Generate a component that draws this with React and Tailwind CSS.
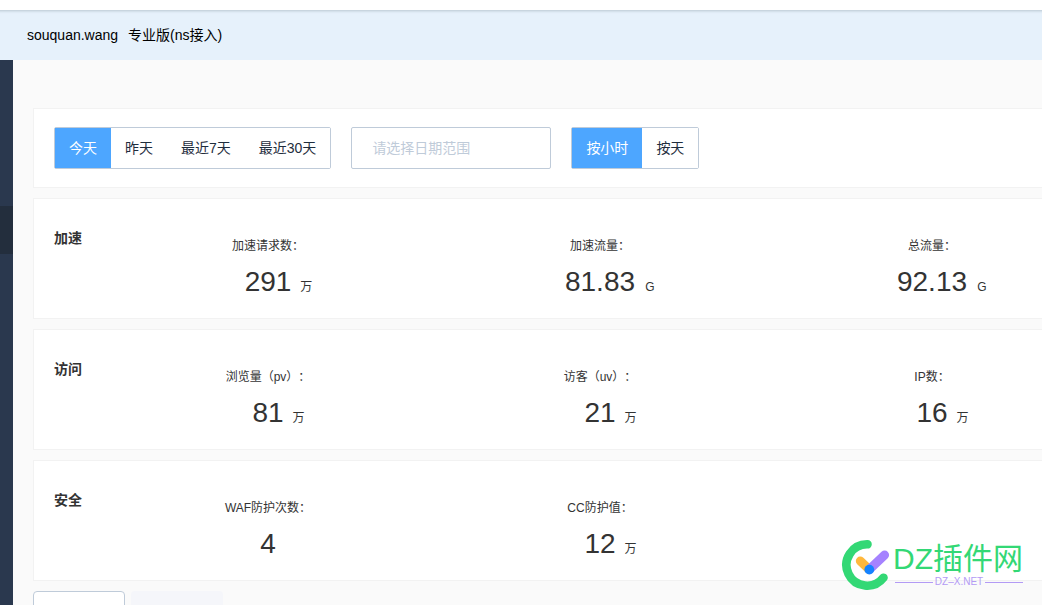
import React, { useState } from 'react';

const ranges = ['今天', '昨天', '最近7天', '最近30天'];
const units = ['按小时', '按天'];

const sections = [
  {
    title: '加速',
    items: [
      { label: '加速请求数：', value: '291', unit: '万' },
      { label: '加速流量：', value: '81.83', unit: 'G' },
      { label: '总流量：', value: '92.13', unit: 'G' },
    ],
  },
  {
    title: '访问',
    items: [
      { label: '浏览量（pv）：', value: '81', unit: '万' },
      { label: '访客（uv）：', value: '21', unit: '万' },
      { label: 'IP数：', value: '16', unit: '万' },
    ],
  },
  {
    title: '安全',
    items: [
      { label: 'WAF防护次数：', value: '4' },
      { label: 'CC防护值：', value: '12', unit: '万' },
    ],
  },
];

const ButtonGroup = ({ options, active, onSelect }) => (
  <div className="flex h-[42px] border border-[#bfcbd9] rounded-xs">
    {options.map((name, index) => (
      <button
        key={name}
        type="button"
        className={`px-3.5 text-sm whitespace-nowrap cursor-pointer ${index === active ? 'bg-[#4da6ff] text-white' : 'bg-white text-[#1f2d3d]'}`}
        onClick={() => onSelect(index)}
      >
        {name}
      </button>
    ))}
  </div>
);

const Stat = ({ label, value, unit }) => (
  <div className="flex flex-col items-center">
    <div className="text-xs leading-5 whitespace-nowrap [text-spacing-trim:space-all]">{label}</div>
    {/* equal side columns keep the number centred whatever the unit is */}
    <div className="mt-2 grid grid-cols-[1fr_auto_1fr] items-baseline">
      <span className="w-[22px]"></span>
      <span className="text-[28px] leading-9">{value}</span>
      <span className="w-[22px] pl-2 text-xs text-center">{unit}</span>
    </div>
  </div>
);

const Section = ({ title, items }) => (
  <section className="flex h-[121px] bg-white border border-[#f2f2f2] pl-5 pr-5">
    <h2 className="w-12 shrink-0 pt-[29px] text-sm leading-5 font-bold">{title}</h2>
    <div className="flex-1 grid grid-cols-3 pt-[37px]">
      {items.map((item) => (
        <Stat key={item.label} {...item} />
      ))}
    </div>
  </section>
);

const Watermark = () => (
  <div className="absolute right-[19px] bottom-3.5 flex items-start gap-0.5 pointer-events-none">
    <svg className="w-[51px] h-[54px]" viewBox="0 0 51 54" fill="none" strokeLinecap="round">
      <path d="M27.5 7.3A20.7 20.7 0 1 0 43.5 40.7" stroke="#33d875" strokeWidth="8.6" />
      <path d="M20.3 24L29 32.3" stroke="#ffb83d" strokeWidth="9" />
      <path d="M44.6 18L29.6 32.3" stroke="#a582ff" strokeWidth="9" />
      <circle cx="29.3" cy="32.6" r="4.9" fill="#1583ff" />
    </svg>
    <div className="flex flex-col pt-1">
      <span className="text-[30px] leading-9 text-[#33d875] whitespace-nowrap">DZ插件网</span>
      <span className="-mt-px flex items-center gap-0.5 text-[10px] leading-3 text-[#b39bf5]">
        <i className="flex-1 ml-0.5 h-px bg-[#b39bf5]"></i>
        DZ–X.NET
        <i className="flex-1 h-px bg-[#b39bf5]"></i>
      </span>
    </div>
  </div>
);

const App = () => {
  const [range, setRange] = useState(0);
  const [unit, setUnit] = useState(0);
  const [date, setDate] = useState('');

  return (
    <div className="relative h-screen overflow-hidden flex flex-col bg-[#fafafa] text-[#333] font-['Liberation_Sans','Noto_Sans_CJK_SC',sans-serif]">
      <div className="h-2.5 shrink-0 bg-white"></div>
      <header className="h-[50px] shrink-0 flex items-center gap-2.5 pl-[27px] pb-0.5 bg-[#e6f1fb] border-t border-[#c8d5df] shadow-[inset_0_3px_2px_-2px_#cfdbe5] text-sm text-black">
        <span>souquan.wang</span>
        <span>专业版(ns接入)</span>
      </header>

      <div className="flex-1 min-h-0 flex">
        <aside className="w-[13px] shrink-0 bg-[#2a384e] pt-[146px]">
          <div className="h-12 bg-[#232e3d]"></div>
        </aside>

        <main className="flex-1 min-w-0 pl-5 pt-12">
          <div className="-mr-[77px] flex flex-col gap-2.5">
            <section className="h-20 flex items-start gap-5 bg-white border border-[#f2f2f2] px-5 pt-[18px]">
              <ButtonGroup options={ranges} active={range} onSelect={setRange} />
              <input
                className="w-[200px] h-[42px] border border-[#bfcbd9] rounded-xs px-5 text-sm text-[#1f2d3d] placeholder:text-[#bfcbd9] outline-none"
                type="text"
                aria-label="日期范围"
                placeholder="请选择日期范围"
                value={date}
                onChange={(e) => setDate(e.target.value)}
              />
              <ButtonGroup options={units} active={unit} onSelect={setUnit} />
            </section>

            {sections.map((section) => (
              <Section key={section.title} {...section} />
            ))}

            <div className="flex gap-1.5">
              <div className="w-[92px] h-9 bg-white border border-[#bfcbd9] rounded-t"></div>
              <div className="w-[92px] h-9 bg-[#f5f6fa] rounded-t"></div>
            </div>
          </div>
        </main>
      </div>

      <Watermark />
    </div>
  );
};

export default App;
